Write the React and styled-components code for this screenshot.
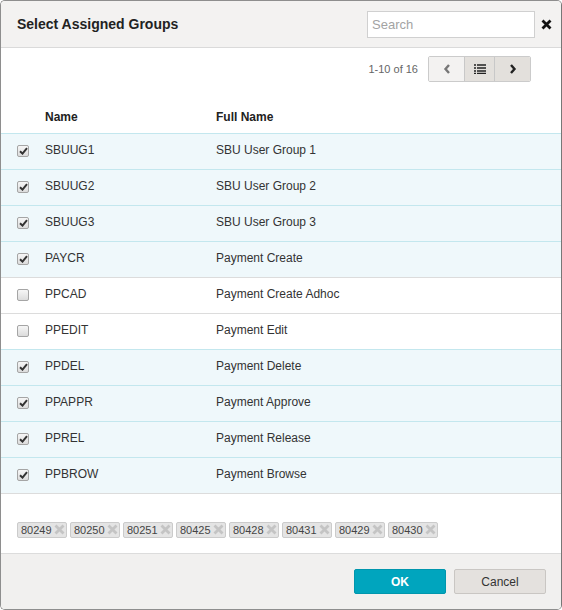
import { styled, createGlobalStyle } from "styled-components";

const GlobalStyle = createGlobalStyle`
  html, body {
    margin: 0;
    padding: 0;
    background: #ffffff;
  }
  body {
    font-family: "Liberation Sans", Arial, sans-serif;
    color: #333;
  }
`;

const groups = [
  { name: "SBUUG1", full: "SBU User Group 1", checked: true },
  { name: "SBUUG2", full: "SBU User Group 2", checked: true },
  { name: "SBUUG3", full: "SBU User Group 3", checked: true },
  { name: "PAYCR", full: "Payment Create", checked: true },
  { name: "PPCAD", full: "Payment Create Adhoc", checked: false },
  { name: "PPEDIT", full: "Payment Edit", checked: false },
  { name: "PPDEL", full: "Payment Delete", checked: true },
  { name: "PPAPPR", full: "Payment Approve", checked: true },
  { name: "PPREL", full: "Payment Release", checked: true },
  { name: "PPBROW", full: "Payment Browse", checked: true },
];

const tags = ["80249", "80250", "80251", "80425", "80428", "80431", "80429", "80430"];

const Modal = styled.div`
  width: 562px;
  height: 610px;
  box-sizing: border-box;
  border: 1px solid #8e8e8e;
  border-right-color: #777;
  border-radius: 5px;
  display: flex;
  flex-direction: column;
  overflow: hidden;
  background: #fff;
`;

const Header = styled.div`
  height: 46px;
  flex: none;
  display: flex;
  align-items: center;
  padding: 0 9px 0 16px;
  background: #f3f2f1;
  border-bottom: 1px solid #dadada;
`;

const Title = styled.h1`
  flex: 1;
  margin: 0;
  font-size: 14px;
  font-weight: bold;
  color: #222;
`;

const SearchInput = styled.input`
  width: 168px;
  height: 27px;
  box-sizing: border-box;
  border: 1px solid #d0d0d0;
  background: #fff;
  padding: 0 4px;
  font-family: inherit;
  font-size: 13px;
  color: #333;
  outline: none;
  &::placeholder {
    color: #a3a3a3;
  }
`;

const CloseButton = styled.button`
  border: none;
  background: none;
  padding: 0;
  margin-left: 6px;
  width: 11px;
  height: 11px;
  display: flex;
  cursor: pointer;
`;

const Body = styled.div`
  flex: 1;
  display: flex;
  flex-direction: column;
`;

const Toolbar = styled.div`
  height: 52px;
  box-sizing: border-box;
  display: flex;
  justify-content: flex-end;
  align-items: flex-start;
  padding: 8px 30px 0 0;
`;

const PageInfo = styled.span`
  font-size: 11px;
  color: #666;
  line-height: 26px;
  margin-left: 3px;
  margin-right: 10px;
`;

const BtnGroup = styled.div`
  display: flex;
  border: 1px solid #cbcbcb;
  border-radius: 2px;
  overflow: hidden;
`;

const PageBtn = styled.button`
  width: ${(p) => p.$w}px;
  height: 24px;
  border: none;
  border-left: ${(p) => (p.$first ? "none" : "1px solid #c8c8c8")};
  background: ${(p) => (p.$disabled ? "#f3f2f1" : "#e3e0dc")};
  display: flex;
  align-items: center;
  justify-content: center;
  padding: 0;
`;

const Table = styled.table`
  width: 100%;
  border-collapse: collapse;
  font-size: 12px;
  border-bottom: 1px solid #dcdcdc;
`;

const HeadCell = styled.th`
  height: 33px;
  padding: 2px 0 0;
  text-align: left;
  font-weight: bold;
  color: #222;
  width: ${(p) => p.$w || "auto"};
  box-sizing: border-box;
`;

const Row = styled.tr`
  height: 36px;
  background: ${(p) => (p.$checked ? "#eff8fb" : "#fff")};
  border-top: 1px solid ${(p) => (p.$checked ? "#c3e7ee" : "#dcdcdc")};
`;

const Cell = styled.td`
  padding: 0 0 2px;
  color: #333;
  padding-left: ${(p) => p.$pl || 0}px;
`;

const CheckBox = styled.span`
  width: 12px;
  height: 12px;
  box-sizing: border-box;
  display: flex;
  align-items: center;
  justify-content: center;
  border: 1px solid #a5a5a5;
  border-radius: 2px;
  background: linear-gradient(#f6f6f6, #dcdcdc);
  margin-top: 1px;
`;

const TagArea = styled.div`
  flex: 1;
  display: flex;
  flex-wrap: wrap;
  align-content: flex-start;
  gap: 3px;
  padding: 28px 16px 0;
`;

const Tag = styled.span`
  width: 50px;
  height: 16px;
  box-sizing: border-box;
  display: flex;
  align-items: center;
  justify-content: space-between;
  padding: 0 1px 0 3px;
  border: 1px solid #cbcbcb;
  border-radius: 2px;
  background: #e4e4e4;
  font-size: 11px;
  color: #444;
`;

const Footer = styled.div`
  height: 56px;
  flex: none;
  box-sizing: border-box;
  display: flex;
  justify-content: flex-end;
  align-items: flex-start;
  gap: 8px;
  padding: 15px 15px 0 0;
  background: #f1f0ef;
  border-top: 1px solid #dcdcdc;
`;

const FooterBtn = styled.button`
  width: 92px;
  height: 25px;
  box-sizing: border-box;
  border-radius: 2px;
  font-family: inherit;
  font-size: 12px;
  cursor: pointer;
  border: 1px solid ${(p) => (p.$primary ? "#0096ad" : "#c9c6c3")};
  background: ${(p) => (p.$primary ? "#00a5be" : "#e4e1de")};
  color: ${(p) => (p.$primary ? "#fff" : "#333")};
  font-weight: ${(p) => (p.$primary ? "bold" : "normal")};
`;

function CheckMark() {
  return (
    <svg width="9" height="8" viewBox="0 0 9 8">
      <path d="M1 4.2 L3.5 6.6 L8 1.2" fill="none" stroke="#333" strokeWidth="2" />
    </svg>
  );
}

function App() {
  return (
    <>
      <GlobalStyle />
      <Modal>
        <Header>
          <Title>Select Assigned Groups</Title>
          <SearchInput placeholder="Search" />
          <CloseButton aria-label="Close">
            <svg width="11" height="11" viewBox="0 0 11 11">
              <path d="M1.5 1.5 L9.5 9.5 M9.5 1.5 L1.5 9.5" stroke="#111" strokeWidth="2.8" />
            </svg>
          </CloseButton>
        </Header>
        <Body>
          <Toolbar>
            <PageInfo>1-10 of 16</PageInfo>
            <BtnGroup>
              <PageBtn $w={35} $first $disabled>
                <svg width="8" height="10" viewBox="0 0 8 10">
                  <path d="M6 1 L2.5 5 L6 9" fill="none" stroke="#777" strokeWidth="2.4" />
                </svg>
              </PageBtn>
              <PageBtn $w={30}>
                <svg width="12" height="10" viewBox="0 0 12 10">
                  <path d="M0 1h2M0 4h2M0 7h2M0 9.5h2" stroke="#222" strokeWidth="1.6" />
                  <path d="M3 1h9M3 4h9M3 7h9M3 9.5h9" stroke="#222" strokeWidth="1.6" />
                </svg>
              </PageBtn>
              <PageBtn $w={36}>
                <svg width="8" height="10" viewBox="0 0 8 10">
                  <path d="M2 1 L5.5 5 L2 9" fill="none" stroke="#222" strokeWidth="2.4" />
                </svg>
              </PageBtn>
            </BtnGroup>
          </Toolbar>
          <Table>
            <thead>
              <tr>
                <HeadCell $w="44px" />
                <HeadCell $w="171px">Name</HeadCell>
                <HeadCell>Full Name</HeadCell>
              </tr>
            </thead>
            <tbody>
              {groups.map((g) => (
                <Row key={g.name} $checked={g.checked}>
                  <Cell $pl={16}>
                    <CheckBox>{g.checked && <CheckMark />}</CheckBox>
                  </Cell>
                  <Cell>{g.name}</Cell>
                  <Cell>{g.full}</Cell>
                </Row>
              ))}
            </tbody>
          </Table>
          <TagArea>
            {tags.map((t) => (
              <Tag key={t}>
                {t}
                <svg width="11" height="11" viewBox="0 0 11 11">
                  <path d="M1.5 1.5 L9.5 9.5 M9.5 1.5 L1.5 9.5" stroke="#c4c4c4" strokeWidth="2.8" />
                </svg>
              </Tag>
            ))}
          </TagArea>
        </Body>
        <Footer>
          <FooterBtn $primary>OK</FooterBtn>
          <FooterBtn>Cancel</FooterBtn>
        </Footer>
      </Modal>
    </>
  );
}

export default App;
